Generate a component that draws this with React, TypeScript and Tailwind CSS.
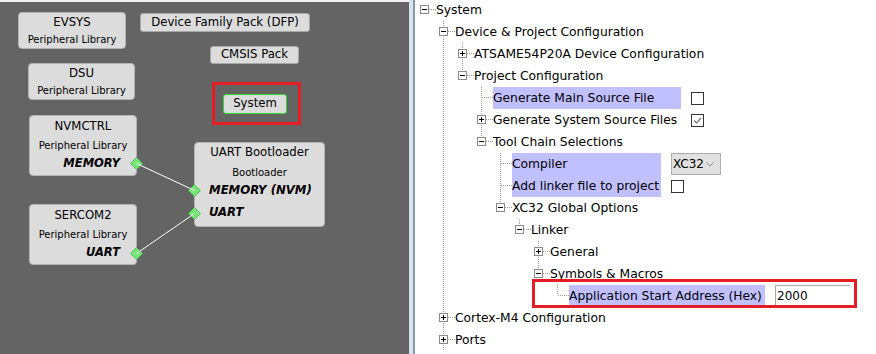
import React from 'react'

type Row = {
  label: string
  level: number
  guides?: number[]
  own: 'full' | 'top' | 'none'
  box?: '+' | '-'
  labelCls?: string
  control?: 'check' | 'checked' | 'select' | 'input'
}

const rows: Row[] = [
  { label: 'System', level: 0, own: 'none', box: '-' },
  { label: 'Device & Project Configuration', level: 1, own: 'full', box: '-' },
  { label: 'ATSAME54P20A Device Configuration', level: 2, guides: [1], own: 'full', box: '+' },
  { label: 'Project Configuration', level: 2, guides: [1], own: 'top', box: '-' },
  { label: 'Generate Main Source File', level: 3, guides: [1], own: 'full', labelCls: 'w-[188px] bg-[#c0c0ff]', control: 'check' },
  { label: 'Generate System Source Files', level: 3, guides: [1], own: 'full', box: '+', labelCls: 'w-[188px]', control: 'checked' },
  { label: 'Tool Chain Selections', level: 3, guides: [1], own: 'top', box: '-' },
  { label: 'Compiler', level: 4, guides: [1], own: 'full', labelCls: 'w-[149px] bg-[#c0c0ff]', control: 'select' },
  { label: 'Add linker file to project', level: 4, guides: [1], own: 'full', labelCls: 'w-[149px] bg-[#c0c0ff]', control: 'check' },
  { label: 'XC32 Global Options', level: 4, guides: [1], own: 'top', box: '-' },
  { label: 'Linker', level: 5, guides: [1], own: 'top', box: '-' },
  { label: 'General', level: 6, guides: [1], own: 'full', box: '+' },
  { label: 'Symbols & Macros', level: 6, guides: [1], own: 'top', box: '-' },
  { label: 'Application Start Address (Hex)', level: 7, guides: [1], own: 'top', labelCls: 'w-[196px] bg-[#c0c0ff]', control: 'input' },
  { label: 'Cortex-M4 Configuration', level: 1, own: 'full', box: '+' },
  { label: 'Ports', level: 1, own: 'full', box: '+' },
]

const DOT = '#9a9a9a'

function Guide({ on }: { on: boolean }) {
  return (
    <svg width={19} height={22} className="shrink-0">
      {on && <line x1={9.5} y1={0} x2={9.5} y2={22} stroke={DOT} strokeDasharray="1 1" />}
    </svg>
  )
}

function Connector({ own, box }: { own: Row['own']; box?: Row['box'] }) {
  return (
    <svg width={21} height={22} className="shrink-0">
      {own === 'full' && <line x1={9.5} y1={0} x2={9.5} y2={22} stroke={DOT} strokeDasharray="1 1" />}
      {own === 'top' && <line x1={9.5} y1={0} x2={9.5} y2={10} stroke={DOT} strokeDasharray="1 1" />}
      <line x1={box ? 14 : 10} y1={10.5} x2={21} y2={10.5} stroke={DOT} strokeDasharray="1 1" />
      {box && (
        <>
          <rect x={5.5} y={6.5} width={8} height={8} fill="#fff" stroke="#8a8a8a" />
          <line x1={7} y1={10.5} x2={12} y2={10.5} stroke="#000" />
          {box === '+' && <line x1={9.5} y1={8} x2={9.5} y2={13} stroke="#000" />}
        </>
      )}
    </svg>
  )
}

function Control({ kind }: { kind: Row['control'] }) {
  if (kind === 'check') return <span className="ml-[10px] w-[13px] h-[13px] border border-[#333] bg-white shrink-0" />
  if (kind === 'checked')
    return (
      <span className="ml-[10px] w-[13px] h-[13px] border border-[#333] bg-white shrink-0 flex items-center justify-center">
        <svg width={11} height={11}>
          <polyline points="2,5.5 4.5,8 9,3" fill="none" stroke="#777" strokeWidth={1.2} />
        </svg>
      </span>
    )
  if (kind === 'select')
    return (
      <span className="ml-[10px] w-[50px] h-[22px] bg-[#e1e1e1] border border-[#adadad] flex items-center pl-[1px] pr-[6px] text-[12px] shrink-0">
        XC32
        <svg width={8} height={5} className="ml-auto">
          <polyline points="0.5,0.5 4,4 7.5,0.5" fill="none" stroke="#888" />
        </svg>
      </span>
    )
  return (
    <span className="ml-[10px] w-[75px] h-[22px] border-t border-l border-b border-[#a8a8a8] bg-white flex items-center pl-[1px] text-[12px] shrink-0">
      2000
    </span>
  )
}

function TreeRow({ row }: { row: Row }) {
  const cells = []
  for (let i = 0; i < row.level; i++) cells.push(<Guide key={i} on={!!row.guides?.includes(i)} />)
  return (
    <div className="flex items-center h-[22px] whitespace-nowrap">
      {cells}
      <Connector own={row.own} box={row.box} />
      <span className={`h-full flex items-center shrink-0 ${row.labelCls ?? ''}`}>{row.label}</span>
      {row.control && <Control kind={row.control} />}
    </div>
  )
}

function Node({
  cls,
  title,
  sub,
  port,
}: {
  cls: string
  title: string
  sub: string
  port?: string
}) {
  return (
    <div className={`absolute rounded-[4px] border border-[#b4b4b4] bg-[#dcdcdc] flex flex-col ${cls}`}>
      <div className="h-[20px] pt-[1px] flex items-center justify-center text-[11.7px]">{title}</div>
      <div className="h-[18px] flex items-center justify-center text-[10px]">{sub}</div>
      {port && <div className="h-[19px] flex items-center justify-end pr-[16px] text-[11.5px] font-bold italic">{port}</div>}
    </div>
  )
}

function Diamond({ x, y }: { x: number; y: number }) {
  return <polygon points={`${x - 6},${y} ${x},${y - 6} ${x + 6},${y} ${x},${y + 6}`} fill="#76e676" stroke="#4fbf4f" />
}

export default function App() {
  return (
    <div className="flex w-[876px] h-[354px] overflow-hidden bg-white text-black font-['DejaVu_Sans',sans-serif]">
      <div className="relative w-[409px] h-full shrink-0 bg-[#646464] shadow-[inset_0_2px_0_#f2f2f2]">
        <Node cls="left-[18px] top-[12px] w-[108px] h-[37px]" title="EVSYS" sub="Peripheral Library" />
        <Node cls="left-[28px] top-[63px] w-[107px] h-[37px]" title="DSU" sub="Peripheral Library" />
        <Node cls="left-[29px] top-[115px] w-[108px] h-[61px]" title="NVMCTRL" sub="Peripheral Library" port="MEMORY" />
        <Node cls="left-[29px] top-[204px] w-[108px] h-[61px]" title="SERCOM2" sub="Peripheral Library" port="UART" />

        <div className="absolute left-[194px] top-[142px] w-[131px] h-[85px] rounded-[4px] border border-[#b4b4b4] bg-[#dcdcdc] flex flex-col">
          <div className="h-[20px] flex items-center justify-center text-[11.7px]">UART Bootloader</div>
          <div className="h-[18px] flex items-center justify-center text-[10px]">Bootloader</div>
          <div className="h-[20px] flex items-center pl-[14px] text-[11.7px] font-bold italic">MEMORY (NVM)</div>
          <div className="h-[23px] flex items-center pl-[14px] text-[11.7px] font-bold italic">UART</div>
        </div>

        <div className="absolute left-[140px] top-[13px] w-[170px] h-[19px] rounded-[3px] border border-[#a8a8a8] bg-[#dcdcdc] flex items-center justify-center text-[11.7px]">
          Device Family Pack (DFP)
        </div>
        <div className="absolute left-[210px] top-[46px] w-[89px] h-[18px] rounded-[3px] border border-[#a8a8a8] bg-[#dcdcdc] flex items-center justify-center text-[11.7px]">
          CMSIS Pack
        </div>
        <div className="absolute left-[223px] top-[94px] w-[64px] h-[20px] rounded-[3px] border border-[#33d633] bg-[#dcdcdc] flex items-center justify-center text-[11.7px]">
          System
        </div>
        <div className="absolute left-[212px] top-[82px] w-[89px] h-[43px] border-[3px] border-[#e51d25]" />

        <svg className="absolute left-0 top-0 pointer-events-none" width={409} height={354}>
          <Diamond x={136.5} y={163.5} />
          <Diamond x={136.5} y={253.5} />
          <Diamond x={194.5} y={190.5} />
          <Diamond x={194.5} y={213.5} />
          <line x1={136.5} y1={163.5} x2={194.5} y2={190.5} stroke="#fff" />
          <line x1={136.5} y1={253.5} x2={194.5} y2={213.5} stroke="#fff" />
        </svg>
      </div>

      <div className="w-[4px] h-full shrink-0 bg-[#dae4ee]" />
      <div className="w-[2px] h-full shrink-0 bg-[#8797ad]" />

      <div className="relative flex-1 h-full text-[12.3px]">
        <div className="-mt-px">
          {rows.map((r, i) => (
            <TreeRow key={i} row={r} />
          ))}
        </div>
        <div className="absolute left-[117px] top-[279px] w-[325px] h-[29px] border-[3px] border-[#e51d25]" />
      </div>
    </div>
  )
}
